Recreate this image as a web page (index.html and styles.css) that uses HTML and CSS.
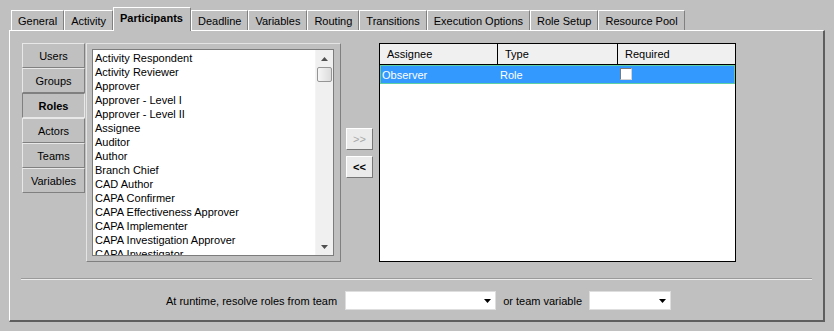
FILE: index.html
```html
<!DOCTYPE html>
<html lang="en">
<head>
    <meta charset="UTF-8">
    <title>Participants</title>
    <link rel="stylesheet" href="styles.css">
</head>
<body>

<div class="tabs">
    <div class="tab">General</div>
    <div class="tab">Activity</div>
    <div class="tab active">Participants</div>
    <div class="tab">Deadline</div>
    <div class="tab">Variables</div>
    <div class="tab">Routing</div>
    <div class="tab">Transitions</div>
    <div class="tab">Execution Options</div>
    <div class="tab">Role Setup</div>
    <div class="tab">Resource Pool</div>
</div>

<div class="panel">
    <div class="main">
        <div class="kinds">
            <div class="kind">Users</div>
            <div class="kind">Groups</div>
            <div class="kind pressed">Roles</div>
            <div class="kind">Actors</div>
            <div class="kind">Teams</div>
            <div class="kind">Variables</div>
        </div>

        <div class="list-frame">
            <div class="listbox">
                <div class="items">
                    <div class="item">Activity Respondent</div>
                    <div class="item">Activity Reviewer</div>
                    <div class="item">Approver</div>
                    <div class="item">Approver - Level I</div>
                    <div class="item">Approver - Level II</div>
                    <div class="item">Assignee</div>
                    <div class="item">Auditor</div>
                    <div class="item">Author</div>
                    <div class="item">Branch Chief</div>
                    <div class="item">CAD Author</div>
                    <div class="item">CAPA Confirmer</div>
                    <div class="item">CAPA Effectiveness Approver</div>
                    <div class="item">CAPA Implementer</div>
                    <div class="item">CAPA Investigation Approver</div>
                    <div class="item">CAPA Investigator</div>
                </div>
                <div class="scrollbar">
                    <div class="sb-arrow">
                        <svg width="7" height="4" viewBox="0 0 7 4"><polygon points="3.5,0 7,4 0,4" fill="#505050"/></svg>
                    </div>
                    <div class="thumb"></div>
                    <div class="track"></div>
                    <div class="sb-arrow">
                        <svg width="7" height="4" viewBox="0 0 7 4"><polygon points="0,0 7,0 3.5,4" fill="#505050"/></svg>
                    </div>
                </div>
            </div>
        </div>

        <div class="movers">
            <button class="mover" disabled>&gt;&gt;</button>
            <button class="mover">&lt;&lt;</button>
        </div>

        <div class="grid">
            <div class="grid-head">
                <div class="cell c1">Assignee</div>
                <div class="cell c2">Type</div>
                <div class="cell c3">Required</div>
            </div>
            <div class="grid-row selected">
                <div class="cell c1">Observer</div>
                <div class="cell c2">Role</div>
                <div class="cell c3"><span class="check"></span></div>
            </div>
        </div>
    </div>

    <div class="separator"></div>

    <div class="resolve">
        <span>At runtime, resolve roles from team</span>
        <div class="combo wide">
            <svg width="7" height="4" viewBox="0 0 7 4"><polygon points="0,0 7,0 3.5,4" fill="#000"/></svg>
        </div>
        <span>or team variable</span>
        <div class="combo narrow">
            <svg width="7" height="4" viewBox="0 0 7 4"><polygon points="0,0 7,0 3.5,4" fill="#000"/></svg>
        </div>
    </div>
</div>

</body>
</html>
```

FILE: styles.css
```css
:root {
    --face: #c0c0c0;
    --light: #ffffff;
    --shadow: #808080;
    --dark: #5e5e5e;
    --select: #3399ff;
}

body {
    margin: 0;
    background-color: var(--face);
    font-family: "Liberation Sans", Arial, sans-serif;
    font-size: 11px;
    color: #000;
}

/* tab strip */
.tabs {
    display: flex;
    align-items: flex-end;
    padding: 7px 0 0 11px;
}

.tab {
    height: 20px;
    line-height: 20px;
    padding: 0 6px;
    box-sizing: border-box;
    border-top: 1px solid var(--light);
    border-left: 1px solid var(--light);
    border-right: 1px solid var(--shadow);
    white-space: nowrap;
}

.tab.active {
    height: 24px;
    line-height: 21px;
    margin-bottom: -1px;
    padding: 0 7px 0 6px;
    font-weight: bold;
    background-color: var(--face);
    position: relative;
    z-index: 1;
}

/* main panel */
.panel {
    margin-left: 9px;
    width: 816px;
    box-sizing: border-box;
    border-top: 1px solid var(--light);
    border-left: 1px solid var(--light);
    border-right: 2px solid var(--dark);
    border-bottom: 2px solid var(--dark);
    padding: 12px 12px 10px 12px;
}

.main {
    display: flex;
    height: 219px;
}

.kinds {
    width: 63px;
    display: flex;
    flex-direction: column;
    align-self: flex-start;
}

.kind {
    height: 25px;
    box-sizing: border-box;
    padding-top: 2px;
    line-height: 21px;
    text-align: center;
    border: 1px solid;
    border-color: #e8e8e8 var(--shadow) var(--shadow) #e8e8e8;
}

.kind.pressed {
    font-weight: bold;
    border-color: var(--shadow) #e8e8e8 #e8e8e8 var(--shadow);
}

.list-frame {
    margin-left: 1px;
    width: 255px;
    box-sizing: border-box;
    border: 1px solid;
    border-color: #e4e4e4 var(--shadow) var(--shadow) #e4e4e4;
    padding: 5px 6px 5px 5px;
}

.listbox {
    height: 100%;
    box-sizing: border-box;
    border: 1px solid #7c7c7c;
    background-color: #fff;
    display: flex;
}

.items {
    flex: 1;
    overflow: hidden;
    padding: 1px 0 0 2px;
}

.item {
    height: 14px;
    line-height: 14px;
    white-space: nowrap;
}

.scrollbar {
    width: 17px;
    background-color: #f0f0f0;
    border-left: 1px solid #f4f4f4;
    display: flex;
    flex-direction: column;
    align-items: center;
}

.sb-arrow {
    height: 17px;
    display: flex;
    align-items: center;
    justify-content: center;
}

.thumb {
    width: 15px;
    height: 15px;
    box-sizing: border-box;
    border: 1px solid #959595;
    border-radius: 2px;
    background: linear-gradient(to right, #f6f6f6, #dcdcdc);
}

.track {
    flex: 1;
}

.movers {
    margin-left: 5px;
    width: 27px;
    display: flex;
    flex-direction: column;
    justify-content: center;
    gap: 6px;
}

.mover {
    width: 27px;
    height: 22px;
    padding: 0;
    font-family: inherit;
    font-size: 11px;
    font-weight: bold;
    color: #000;
    background-color: #ebebeb;
    border: 1px solid;
    border-color: #fff #777 #777 #fff;
}

.mover:disabled {
    color: #a8a8a8;
    font-weight: normal;
}

/* assignee table */
.grid {
    margin-left: 6px;
    width: 357px;
    box-sizing: border-box;
    border: 1px solid #000;
    background-color: #fff;
}

.grid-head {
    display: flex;
    height: 21px;
    box-sizing: border-box;
    background-color: #f0f0f0;
    border-bottom: 1px solid #000;
}

.grid-head .cell {
    line-height: 21px;
    padding-left: 7px;
}

.cell {
    box-sizing: border-box;
    white-space: nowrap;
}

.c1 { width: 118px; }
.c2 { width: 120px; }
.c3 { flex: 1; }

.grid-head .c1, .grid-head .c2 {
    border-right: 1px solid #000;
}

.grid-row {
    display: flex;
    height: 19px;
    box-sizing: border-box;
}

.grid-row .cell {
    line-height: 18px;
    padding-left: 2px;
}

.grid-row .c1 { width: 117px; padding-left: 1px; }

.grid-row.selected {
    background-color: var(--select);
    color: #fff;
    border: 1px solid #5fd0a4;
}

.check {
    display: inline-block;
    margin-top: 2px;
    width: 12px;
    height: 12px;
    box-sizing: border-box;
    background-color: #fff;
    border: 1px solid;
    border-color: #7a7a7a #d4d4d4 #d4d4d4 #7a7a7a;
    vertical-align: top;
}

.separator {
    margin: 16px -1px 0 -1px;
    border-top: 1px solid #9a9a9a;
    border-bottom: 1px solid #ececec;
}

.resolve {
    margin-top: 11px;
    display: flex;
    align-items: center;
    justify-content: center;
    padding-left: 4px;
}

.combo {
    height: 19px;
    box-sizing: border-box;
    background-color: #fff;
    border: 1px solid #dedede;
    display: flex;
    align-items: center;
    justify-content: flex-end;
    padding-right: 4px;
}

.combo.wide {
    width: 151px;
    margin: 0 7px 0 8px;
}

.combo.narrow {
    width: 82px;
    margin-left: 7px;
}
```
